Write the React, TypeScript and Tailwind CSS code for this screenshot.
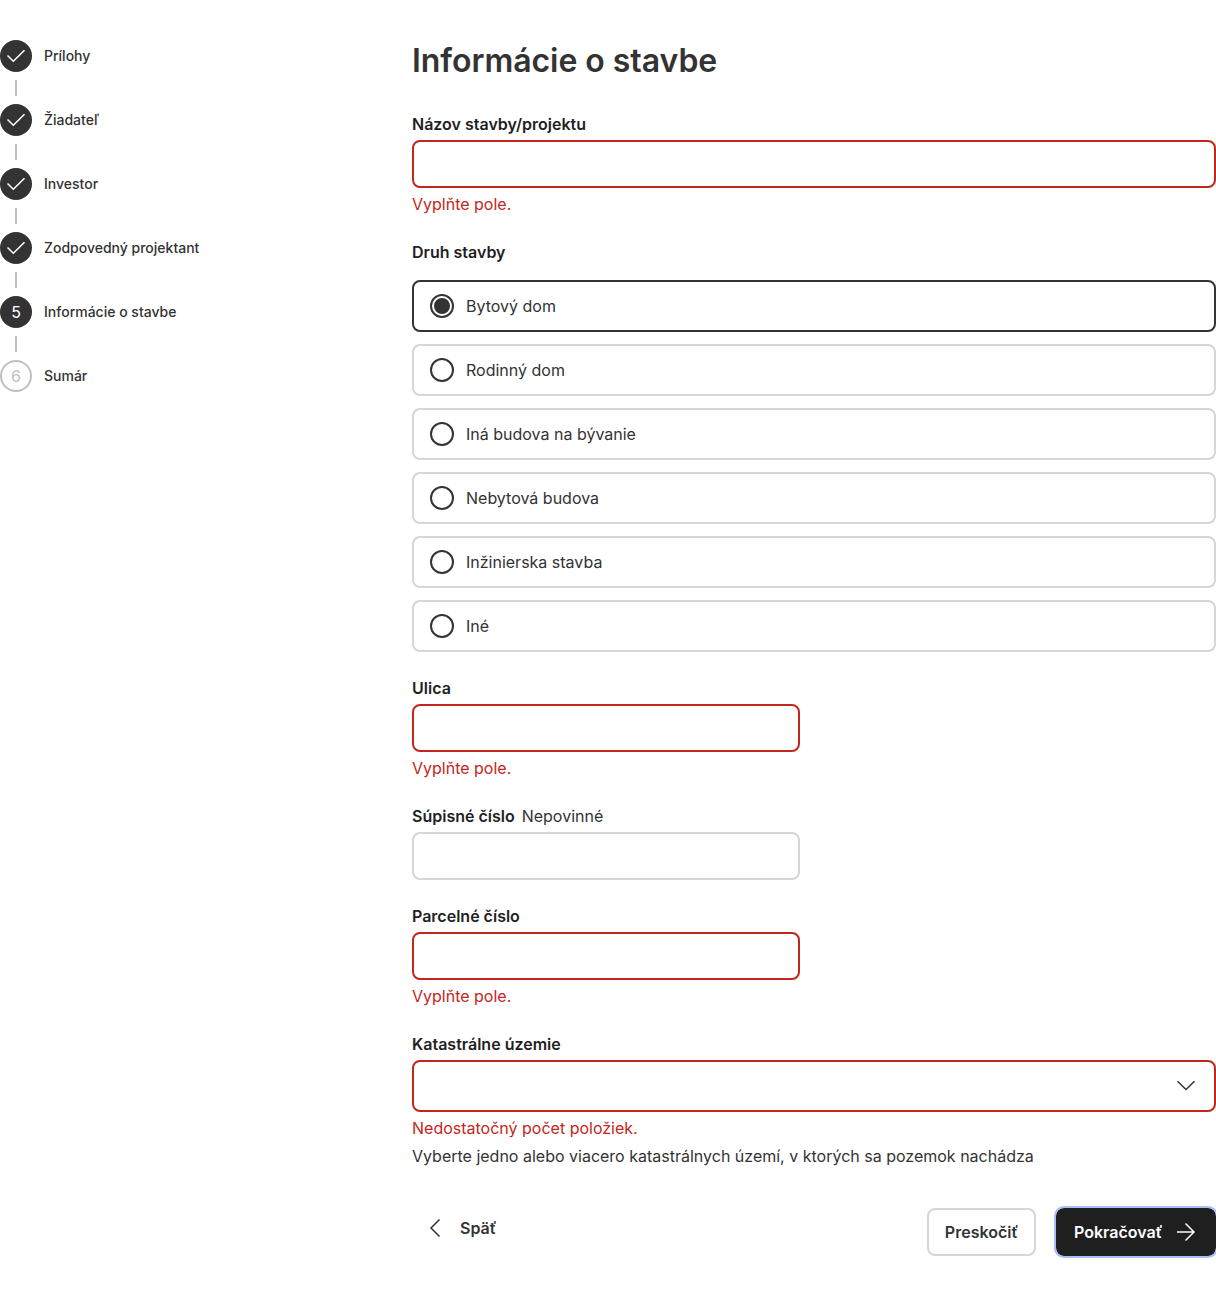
import React from "react";

const steps = ["Prílohy", "Žiadateľ", "Investor", "Zodpovedný projektant", "Informácie o stavbe", "Sumár"];
const kinds = ["Bytový dom", "Rodinný dom", "Iná budova na bývanie", "Nebytová budova", "Inžinierska stavba", "Iné"];

function StepMark({ index }: { index: number }) {
  if (index < 4) {
    return (
      <span className="flex size-8 items-center justify-center rounded-full bg-[#333333]">
        <svg width="24" height="24" viewBox="0 0 24 24" fill="none" stroke="white" strokeWidth="1.5">
          <path d="m3.5 11.5 5.8 5.8L20.5 6.2" />
        </svg>
      </span>
    );
  }
  if (index === 4) {
    return <span className="flex size-8 items-center justify-center rounded-full bg-[#333333] text-white">5</span>;
  }
  return (
    <span className="flex size-8 items-center justify-center rounded-full border-2 border-[#bfbfbf] text-[#bfbfbf]">6</span>
  );
}

function Field({ label, optional, error, wide, className }: { label: string; optional?: boolean; error?: boolean; wide?: boolean; className?: string }) {
  return (
    <div className={className}>
      <div className="flex gap-[7px] leading-6">
        <label className="font-semibold text-[#1f1f1f]">{label}</label>
        {optional && <span>Nepovinné</span>}
      </div>
      <input
        className={`mt-1 block h-12 rounded-lg border-2 bg-white px-4 outline-none ${wide ? "w-full" : "w-[388px]"} ${error ? "border-[#c3271b]" : "border-[#d6d6d6]"}`}
      />
      {error && <p className="mt-1 leading-6 text-[#c3271b]">Vyplňte pole.</p>}
    </div>
  );
}

export default function App() {
  return (
    <div className="flex h-[1296px] bg-white pt-10 font-['Inter',sans-serif] text-base text-[#333333]">
      <nav className="w-[412px] shrink-0">
        {steps.map((s, i) => (
          <div key={s}>
            {i > 0 && <div className="my-2 ml-[15px] h-4 w-0.5 bg-[#bfbfbf]" />}
            <div className="flex items-center gap-3">
              <StepMark index={i} />
              <span className="text-sm leading-5 font-medium">{s}</span>
            </div>
          </div>
        ))}
      </nav>
      <main className="w-[804px]">
        <h1 className="pt-px text-[32px] leading-[39px] font-semibold tracking-[-0.04px]">Informácie o stavbe</h1>
        <Field className="mt-8" label="Názov stavby/projektu" error wide />
        <div className="mt-6 leading-6 font-semibold text-[#1f1f1f]">Druh stavby</div>
        <div className="mt-4 flex flex-col gap-3">
          {kinds.map((k, i) => (
            <label key={k} className={`flex h-[52px] items-center gap-3 rounded-lg border-2 px-4 ${i === 0 ? "border-[#333333]" : "border-[#d6d6d6]"}`}>
              <span className="flex size-6 items-center justify-center rounded-full border-2 border-[#333333]">
                {i === 0 && <span className="size-4 rounded-full bg-[#333333]" />}
              </span>
              {k}
            </label>
          ))}
        </div>
        <Field className="mt-6" label="Ulica" error />
        <Field className="mt-6" label="Súpisné číslo" optional />
        <Field className="mt-6" label="Parcelné číslo" error />
        <div className="mt-6 leading-6 font-semibold text-[#1f1f1f]">Katastrálne územie</div>
        <div className="mt-1 flex h-[52px] items-center justify-end rounded-lg border-2 border-[#c3271b] px-4">
          <svg width="24" height="24" viewBox="0 0 24 24" fill="none" stroke="#333333" strokeWidth="1.5">
            <path d="m3.5 7.2 8.5 8.3 8.5-8.3" />
          </svg>
        </div>
        <p className="mt-1 leading-6 text-[#c3271b]">Nedostatočný počet položiek.</p>
        <p className="mt-1 leading-6">Vyberte jedno alebo viacero katastrálnych území, v ktorých sa pozemok nachádza</p>
        <div className="mt-10 flex items-start justify-between font-semibold">
          <button className="flex h-10 items-center gap-3 pl-3">
            <svg width="24" height="24" viewBox="0 0 24 24" fill="none" stroke="#333333" strokeWidth="1.5">
              <path d="M15.5 3.5 7 12l8.5 8.5" />
            </svg>
            Späť
          </button>
          <div className="flex gap-5">
            <button className="flex h-12 w-[109px] items-center justify-center rounded-lg border-2 border-[#d6d6d6]">Preskočiť</button>
            <button className="flex h-12 w-40 items-center justify-between rounded-lg bg-[#1f1f1f] pr-[18px] pl-[18px] text-white outline-2 outline-[#a3bffa]">
              Pokračovať
              <svg width="24" height="24" viewBox="0 0 24 24" fill="none" stroke="white" strokeWidth="1.5">
                <path d="M3 12h16.5M11.5 3.5 20 12l-8.5 8.5" />
              </svg>
            </button>
          </div>
        </div>
      </main>
    </div>
  );
}
